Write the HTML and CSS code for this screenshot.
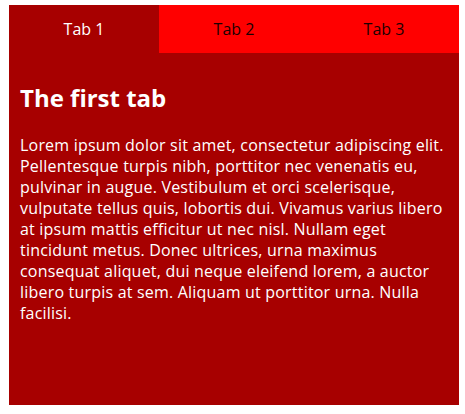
FILE: index.html
```html
<!DOCTYPE html>
<html>
<head>
<meta charset="utf-8">
<link rel="stylesheet" href="styles.css">
</head>
<body>
<div class="tabs">
  <div class="tab-bar">
    <div class="tab active">Tab 1</div>
    <div class="tab">Tab 2</div>
    <div class="tab">Tab 3</div>
  </div>
  <div class="panel">
    <h2 class="title">The first tab</h2>
    <p class="text">Lorem ipsum dolor sit amet, consectetur adipiscing elit. Pellentesque turpis nibh, porttitor nec venenatis eu, pulvinar in augue. Vestibulum et orci scelerisque, vulputate tellus quis, lobortis dui. Vivamus varius libero at ipsum mattis efficitur ut nec nisl. Nullam eget tincidunt metus. Donec ultrices, urna maximus consequat aliquet, dui neque eleifend lorem, a auctor libero turpis at sem. Aliquam ut porttitor urna. Nulla facilisi.</p>
  </div>
</div>
</body>
</html>
```
FILE: styles.css
```css
html, body {
  margin: 0;
  padding: 0;
  background: #ffffff;
}
body {
  padding: 5px 0 0 9px;
  font-family: "Open Sans", "Liberation Sans", sans-serif;
  font-variant-ligatures: none;
}
.tabs {
  width: 450px;
  height: 400px;
  display: flex;
  flex-direction: column;
  background: #a70000;
}
.tab-bar {
  display: flex;
  height: 48px;
  background: #ff0000;
}
.tab {
  flex: 1;
  display: flex;
  align-items: center;
  justify-content: center;
  font-size: 16px;
  color: #1a0000;
}
.tab.active {
  background: #a70000;
  color: #ffffff;
}
.panel {
  flex: 1;
  padding: 0 12px 0 11px;
  color: #ffffff;
}
.title {
  margin: 29px 0 0 0;
  font-size: 24px;
  line-height: 32px;
  font-weight: 700;
}
.text {
  margin: 20.5px 0 0 0;
  font-size: 16px;
  line-height: 21px;
  letter-spacing: 0.2px;
}
```
